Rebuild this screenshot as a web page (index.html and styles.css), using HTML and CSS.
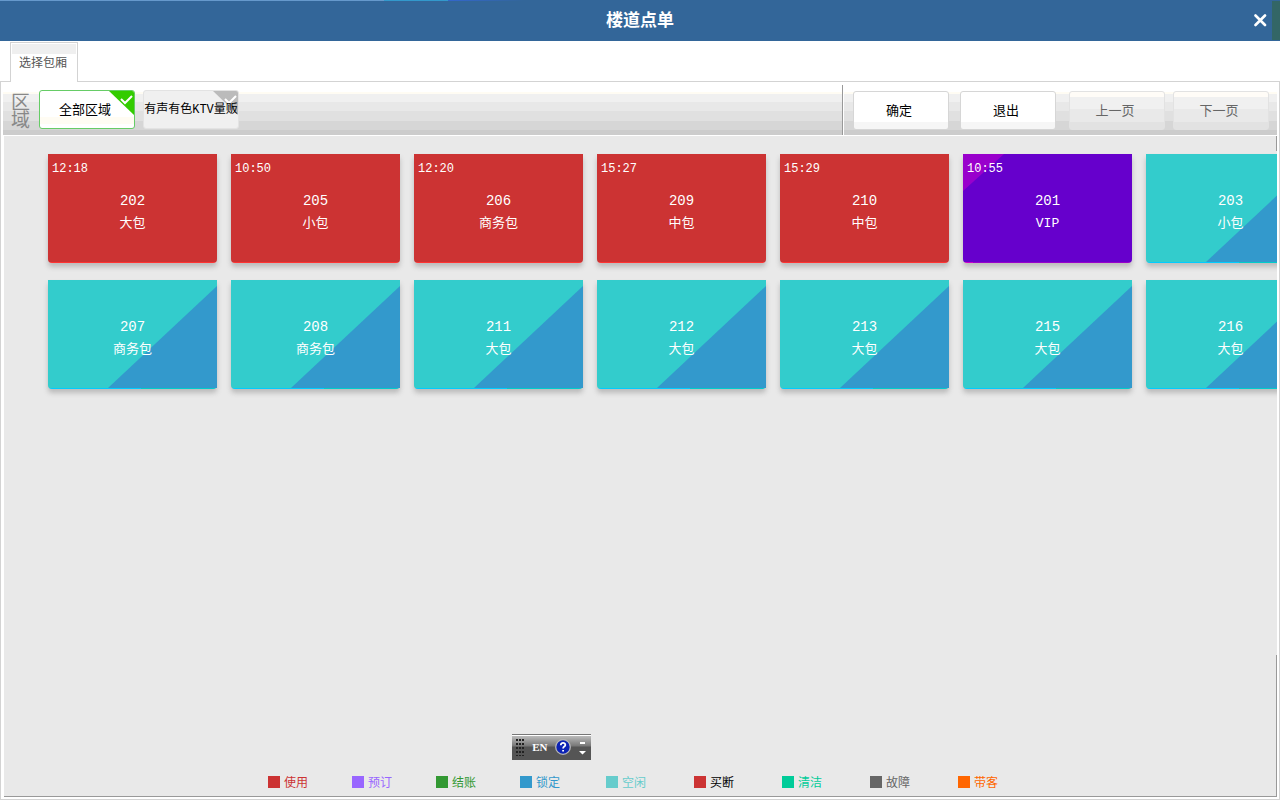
FILE: index.html
```html
<!DOCTYPE html>
<html lang="zh-CN">
<head>
<meta charset="utf-8">
<title>楼道点单</title>
<link rel="stylesheet" href="styles.css">
</head>
<body>
<header class="titlebar">
  <h1 class="title">楼道点单</h1>
  <button class="close" type="button" aria-label="关闭">
    <svg width="14" height="14" viewBox="0 0 14 14"><path d="M2.500 1.500L12 11M12 1.500L2.500 11" stroke="#fff" stroke-width="2.6" stroke-linecap="round"/></svg>
  </button>
</header>
<nav class="tabs"><button class="tab" type="button">选择包厢</button></nav>
<main class="panel">
  <div class="toolbar">
    <div class="areas">
      <span class="areas-label">区域</span>
      <button class="area selected" type="button" aria-pressed="true">全部区域
        <svg class="corner" width="25" height="24" viewBox="0 0 25 24"><path d="M0 0H25V24Z" fill="#3c0"/><path d="M12 8L16 12L23 5" fill="none" stroke="#fff" stroke-width="2"/></svg>
      </button>
      <button class="area long" type="button" aria-pressed="false">有声有色KTV量贩
        <svg class="corner" width="25" height="24" viewBox="0 0 25 24"><path d="M0 0H25V24Z" fill="#bbb"/><path d="M12 8L16 12L23 5" fill="none" stroke="#fff" stroke-width="2"/></svg>
      </button>
    </div>
    <div class="actions">
      <button class="action" type="button">确定</button>
      <button class="action" type="button">退出</button>
      <div class="pager">
        <button class="action" type="button" disabled>上一页</button>
        <button class="action" type="button" disabled>下一页</button>
      </div>
    </div>
  </div>
  <section class="content">
    <div class="rooms">
      <button class="room used" type="button"><span class="time">12:18</span><span class="number">202</span><span class="kind">大包</span></button>
      <button class="room used" type="button"><span class="time">10:50</span><span class="number">205</span><span class="kind">小包</span></button>
      <button class="room used" type="button"><span class="time">12:20</span><span class="number">206</span><span class="kind">商务包</span></button>
      <button class="room used" type="button"><span class="time">15:27</span><span class="number">209</span><span class="kind">中包</span></button>
      <button class="room used" type="button"><span class="time">15:29</span><span class="number">210</span><span class="kind">中包</span></button>
      <button class="room booked" type="button"><span class="time">10:55</span><span class="number">201</span><span class="kind">VIP</span></button>
      <button class="room free" type="button"><span class="time"></span><span class="number">203</span><span class="kind">小包</span></button>
      <button class="room free" type="button"><span class="time"></span><span class="number">207</span><span class="kind">商务包</span></button>
      <button class="room free" type="button"><span class="time"></span><span class="number">208</span><span class="kind">商务包</span></button>
      <button class="room free" type="button"><span class="time"></span><span class="number">211</span><span class="kind">大包</span></button>
      <button class="room free" type="button"><span class="time"></span><span class="number">212</span><span class="kind">大包</span></button>
      <button class="room free" type="button"><span class="time"></span><span class="number">213</span><span class="kind">大包</span></button>
      <button class="room free" type="button"><span class="time"></span><span class="number">215</span><span class="kind">大包</span></button>
      <button class="room free" type="button"><span class="time"></span><span class="number">216</span><span class="kind">大包</span></button>
    </div>
    <ul class="legend">
      <li class="c-used">使用</li>
      <li class="c-booked">预订</li>
      <li class="c-paid">结账</li>
      <li class="c-locked">锁定</li>
      <li class="c-free">空闲</li>
      <li class="c-buyout">买断</li>
      <li class="c-clean">清洁</li>
      <li class="c-fault">故障</li>
      <li class="c-guest">带客</li>
    </ul>
  </section>
</main>
<div class="langbar">
  <span class="grip"></span>
  <span class="lang">EN</span>
  <svg width="16" height="16" viewBox="0 0 16 16"><circle cx="8" cy="8" r="7.3" fill="#0c22b4" stroke="#b8b8b8" stroke-width="1.3"/><path d="M5.8 6.2C5.8 3 10.4 3.200 10.300 6C10.200 7.600 8.100 7.600 8.100 9.400M8.100 11V12.600" fill="none" stroke="#fff" stroke-width="1.8"/></svg>
  <svg width="9" height="16" viewBox="0 0 9 16"><path d="M2 3H7V5H2ZM1 12H8L4.500 15.500Z" fill="#fff"/></svg>
</div>
</body>
</html>
```
FILE: styles.css
```css
* { box-sizing: border-box; }

body {
  margin: 0;
  min-height: 100vh;
  display: flex;
  flex-direction: column;
  position: relative;
  background: #fff;
  font-family: "Liberation Mono", "Noto Sans CJK SC", monospace;
  font-size: 13px;
  color: #000;
}

button {
  font: inherit;
  padding: 0;
  border: 0;
}

.titlebar {
  display: grid;
  grid-template-columns: 1fr auto 1fr;
  align-items: center;
  height: 41px;
  background:
    linear-gradient(90deg, #69c 30%, #39c 30%, #39c 35%, #36c 35%, #369 41%) top / 100% 1px no-repeat,
    linear-gradient(#366, #366) right top / 8px 40px no-repeat,
    #369;
}

.title {
  grid-column: 2;
  margin: 0;
  padding-top: 2px;
  font-size: 17px;
  line-height: 20px;
  font-weight: 700;
  color: #fff;
}

.close {
  justify-self: end;
  display: flex;
  margin-right: 13px;
  background: none;
}

.tabs {
  display: flex;
  padding: 1px 10px 0;
}

.tab {
  width: 68px;
  height: 40px;
  margin-bottom: -1px;
  padding: 0 2px 2px 0;
  position: relative;
  border: 1px solid #d3d3d3;
  border-bottom: 0;
  background: linear-gradient(#efefef, #efefef) center 1px / calc(100% - 2px) 10px no-repeat, #fff;
  font-size: 12px;
  color: #555;
}

.panel {
  flex: 1;
  display: flex;
  flex-direction: column;
  padding: 3px 2px 2px;
  border: 1px solid #d3d3d3;
}

.toolbar {
  display: flex;
  height: 51px;
  border-bottom: 1px solid #fff;
}

.areas,
.actions {
  display: flex;
  align-items: center;
  background: linear-gradient(#fff 7px, #fffcf3 7px, #fffcf3 9px, #f0f0f0 9px, #f0f0f0 17px, #e8e8e8 17px, #e8e8e8 26px, #e0e0e0 26px, #e0e0e0 36px, #d6d6d6 36px, #d6d6d6 45px, #ccc 45px);
}

.areas {
  flex: 1;
  gap: 8px;
  border-right: 1px solid #999;
}

.areas-label {
  width: 20px;
  margin-left: 8px;
  padding-top: 6px;
  font-size: 19px;
  line-height: 18px;
  color: #888;
}

.area {
  position: relative;
  isolation: isolate;
  width: 96px;
  height: 39px;
  margin-bottom: 2px;
  padding-bottom: 2px;
  overflow: hidden;
  white-space: nowrap;
  border: 1px solid #e3e3e3;
  border-radius: 3px;
  background: #f0f0f0;
  display: flex;
  align-items: center;
  justify-content: center;
}

.area.selected {
  padding-right: 4px;
  border-color: #6c6;
  background: linear-gradient(#fff 70%, #fffcf3 70%, #fffcf3 88%, #fff 88%);
}

.area.long {
  font-size: 12px;
}

.corner {
  position: absolute;
  top: 0;
  right: 0;
  z-index: -1;
}

.actions {
  gap: 11px;
  padding: 0 8px 0 9px;
  border-left: 1px solid #fff;
}

.pager {
  display: flex;
  gap: 8px;
  margin-left: 2px;
}

.action {
  width: 96px;
  height: 39px;
  padding: 0 4px 2px 0;
  border: 1px solid #d6d6d6;
  border-radius: 3px;
  background: linear-gradient(#fff 80%, #f6f6f6 80%);
  color: #000;
}

.action:disabled {
  border-color: #e2e2e2;
  background: linear-gradient(#fffcf7 5px, #f0f0f0 5px, #f0f0f0 46%, #e9e9e9 46%, #e9e9e9 80%, #e2e2e2 80%);
  color: #666;
}

.content {
  flex: 1;
  min-width: 0;
  display: flex;
  flex-direction: column;
  margin-left: 1px;
  padding-top: 15px;
  border-right: 1px solid #999;
  border-bottom: 1px solid #999;
  background: #e9e9e9;
}

.rooms {
  flex: 0 1 504px;
  display: grid;
  grid-template-columns: repeat(7, 169px);
  align-content: start;
  gap: 17px 14px;
  margin-right: -1px;
  padding: 3px 0 0 44px;
  overflow: hidden;
  background: #e9e9e9;
}

.room {
  position: relative;
  isolation: isolate;
  display: flex;
  flex-direction: column;
  align-items: center;
  height: 109px;
  padding-top: 7px;
  border-radius: 0 0 4px 4px;
  box-shadow: 0 4px 5px #bbb;
  color: #fff;
}

.room::before {
  content: "";
  position: absolute;
  inset: 0 0 1px;
  z-index: -1;
}

.used { background: linear-gradient(#f33, #f33) bottom / 100% 1px no-repeat, #c33; }

.booked { background: linear-gradient(90deg, #c0c 6%, #90c 6%) bottom / 100% 1px no-repeat, #60c; }
.booked::before {
  background: #90c;
  clip-path: polygon(0 0, 41px 0, 0 37px);
}

.free { background: linear-gradient(90deg, #0cf 55%, #0cc 55%) bottom / 100% 1px no-repeat, #3cc; }
.free::before {
  background: #39c;
  clip-path: polygon(100% 6px, 100% 100%, 60px 100%);
}

.time {
  align-self: flex-start;
  height: 16px;
  margin: 0 0 13px 4px;
  font-size: 12px;
  line-height: 16px;
}

.number {
  font-size: 14px;
  line-height: 22px;
}

.kind {
  font-size: 13px;
  line-height: 24px;
}

.legend {
  display: grid;
  grid-template-columns: repeat(3, 84px) 86px repeat(4, 88px) 40px;
  justify-content: center;
  margin: auto 0 4px;
  padding: 0 14px 0 0;
  list-style: none;
  font-size: 12px;
}

.legend li {
  display: grid;
  grid-template-columns: 12px auto;
  justify-content: start;
  align-items: end;
  gap: 4px;
  height: 20px;
  line-height: 24px;
  white-space: nowrap;
}

.legend li::before {
  content: "";
  width: 12px;
  height: 12px;
  margin-bottom: 8px;
  background: currentColor;
}

.c-used { color: #c33; }
.c-booked { color: #96f; }
.c-paid { color: #393; }
.c-locked { color: #39c; }
.c-free { color: #6cc; }
.c-buyout { color: #000; }
.legend .c-buyout::before { background: #c33; }
.c-clean { color: #0c9; }
.c-fault { color: #666; }
.c-guest { color: #f60; }

.langbar {
  position: absolute;
  left: 40%;
  bottom: 40px;
  display: flex;
  align-items: center;
  justify-content: space-between;
  width: 79px;
  height: 26px;
  padding: 0 4px 1px;
  border-top: 1px solid #777;
  background: linear-gradient(#fff 1px, #bbb 1px, #777 11px, #555 12px);
  color: #fff;
}

.grip {
  width: 9px;
  height: 17px;
  background: radial-gradient(circle at 1px 1px, #222 1px, transparent 1px) 0 0 / 3px 4px;
}

.lang {
  font-size: 11px;
  font-weight: 700;
  font-family: "Liberation Serif", serif;
}
```
